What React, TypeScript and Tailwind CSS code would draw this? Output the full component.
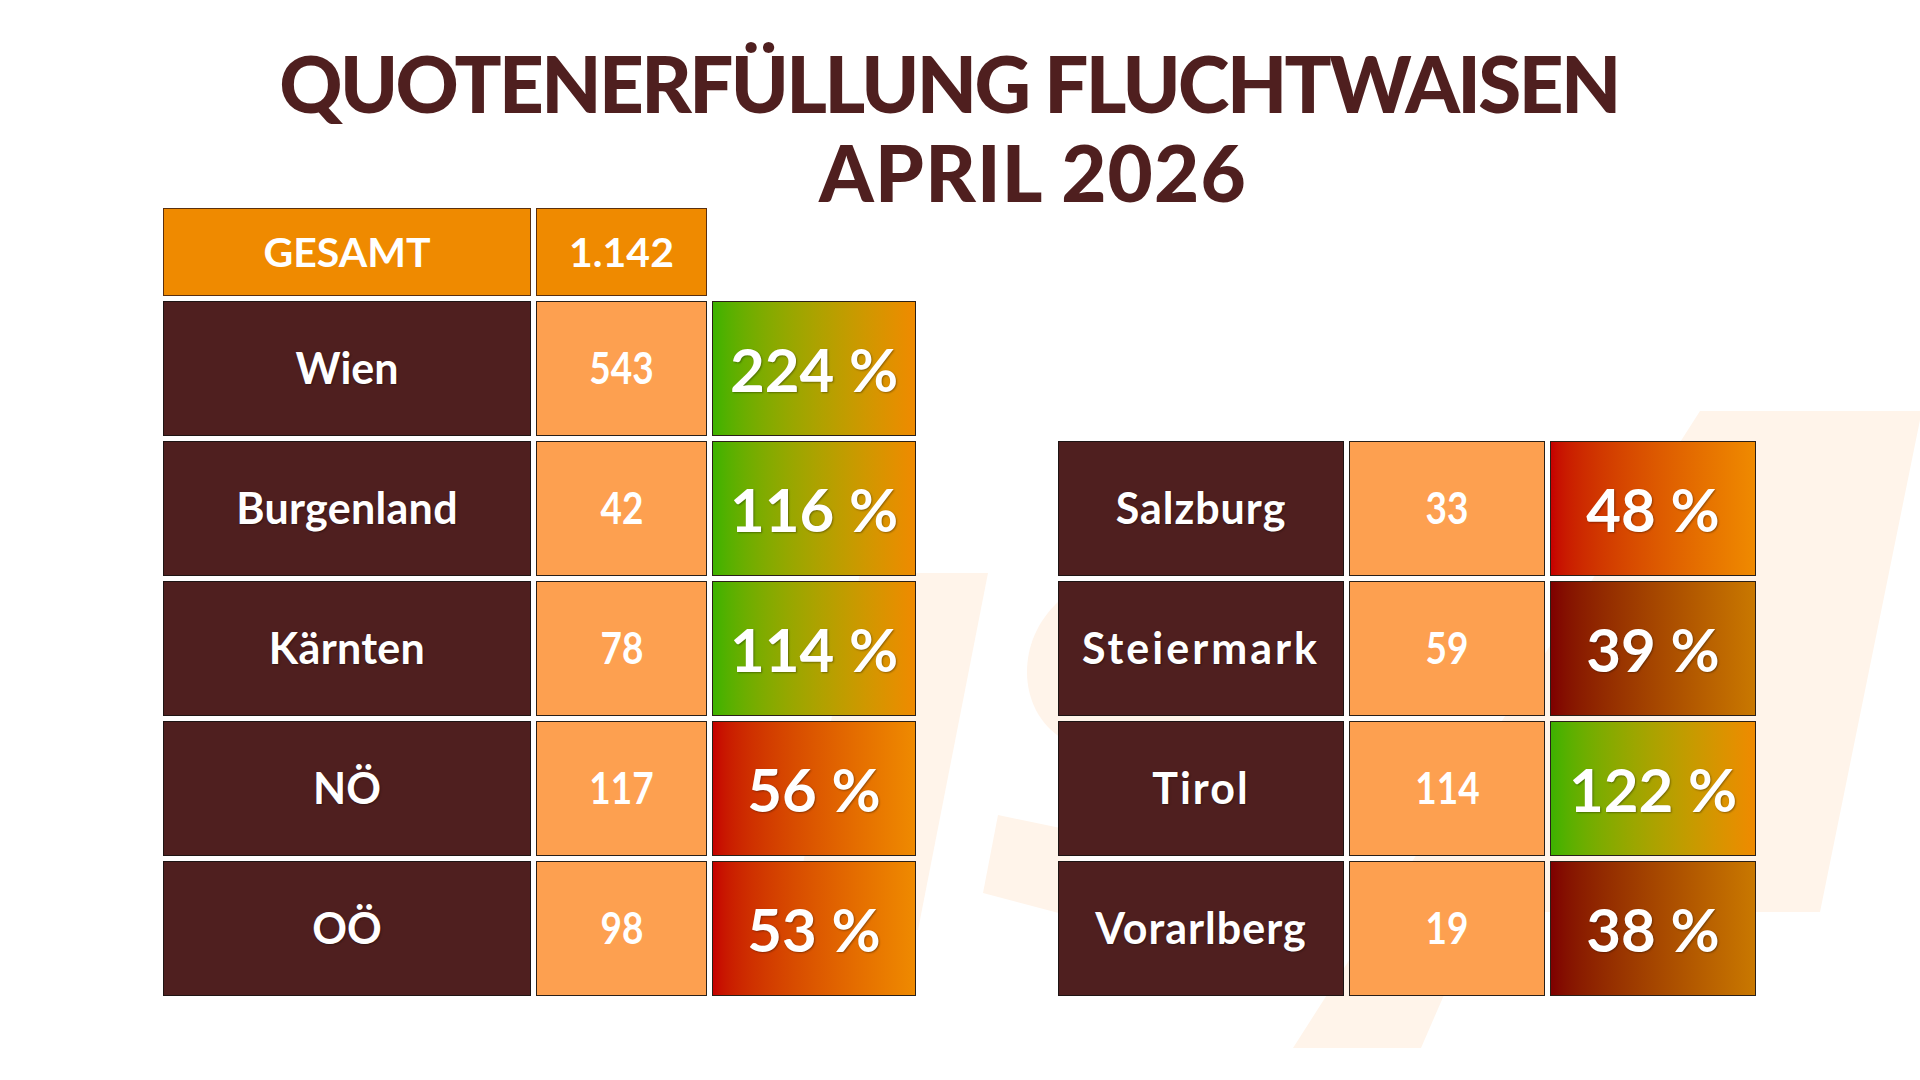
import React from 'react';

type Tone = 'green' | 'red' | 'dark';

const toneClass: Record<Tone, string> = {
  green: 'bg-linear-to-r from-[#3cb200] to-[#ef8a00]',
  red: 'bg-linear-to-r from-[#c60000] to-[#ef8a00]',
  dark: 'bg-linear-to-r from-[#7f0000] to-[#c97800]',
};

const leftRows = [
  { name: 'Wien', count: '543', pct: '224 %', tone: 'green' as Tone, track: '' },
  { name: 'Burgenland', count: '42', pct: '116 %', tone: 'green' as Tone, track: 'tracking-[0.3px]' },
  { name: 'Kärnten', count: '78', pct: '114 %', tone: 'green' as Tone, track: 'tracking-[0.3px]' },
  { name: 'NÖ', count: '117', pct: '56 %', tone: 'red' as Tone, track: '' },
  { name: 'OÖ', count: '98', pct: '53 %', tone: 'red' as Tone, track: '' },
];

const rightRows = [
  { name: 'Salzburg', count: '33', pct: '48 %', tone: 'red' as Tone, track: 'tracking-[1px]' },
  { name: 'Steiermark', count: '59', pct: '39 %', tone: 'dark' as Tone, track: 'tracking-[3px]' },
  { name: 'Tirol', count: '114', pct: '122 %', tone: 'green' as Tone, track: 'tracking-[2px]' },
  { name: 'Vorarlberg', count: '19', pct: '38 %', tone: 'dark' as Tone, track: 'tracking-[1px]' },
];

const shadow = '[text-shadow:1px_1px_2px_rgba(0,0,0,0.35)]';

// faint logo in the background
const Watermark = () => (
  <svg className="absolute inset-0" width="1920" height="1080" viewBox="0 0 1920 1080">
    <g fill="#fff4ea">
      <polygon points="1796,411 1920,411 1920,420 1820,912 1480,912 1421,1048 1293,1048 1700,411" />
      <polygon points="860,573 988,573 918,930 790,930" />
      <path d="M1060,600 C1036,622 1027,648 1027,672 C1027,700 1040,724 1060,737 L1200,737 L1200,600 Z" />
      <polygon points="998,815 1070,830 1070,916 983,893" />
    </g>
  </svg>
);

const Row = ({
  name,
  count,
  pct,
  tone,
  track,
  widths,
}: {
  name: string;
  count: string;
  pct: string;
  tone: Tone;
  track: string;
  widths: [string, string, string];
}) => (
  <div className="flex gap-[5px] h-[135px]">
    <div className={`${widths[0]} bg-[#4f1f1f] border-[1.5px] border-[#1e1414] flex items-center justify-center text-white text-[43px] font-bold ${track} ${shadow}`}>
      {name}
    </div>
    <div className={`${widths[1]} bg-[#fda050] border-[1.5px] border-[#2a2018] flex items-center justify-center text-white text-[43px] font-bold`}>
      <span className="inline-block scale-x-[0.86]">{count}</span>
    </div>
    <div className={`${widths[2]} ${toneClass[tone]} border-[1.5px] border-[#2a2018] flex items-center justify-center text-white text-[60px] font-bold ${shadow}`}>
      {pct}
    </div>
  </div>
);

const App = () => {
  return (
    <div className="relative w-[1920px] h-[1080px] bg-white overflow-hidden font-['Lato','Open_Sans',sans-serif]">
      <Watermark />
      <div className="relative">
        <h1 className="pt-[47px] text-[#4f1f1f] text-[78px] leading-[72px] font-black">
          <div className="text-center pr-[22px] tracking-[-2.6px]">QUOTENERFÜLLUNG FLUCHTWAISEN</div>
          <div className="text-center pl-[146px] mt-[17px] tracking-[1.2px]">APRIL 2026</div>
        </h1>

        <div className="flex items-start pl-[163px]">
          <div className="flex flex-col gap-[5px]">
            <div className="flex gap-[5px] h-[88px]">
              <div className="w-[368px] bg-[#ef8a00] border-[1.5px] border-[#5a3010] flex items-center justify-center text-white text-[41px] font-bold">
                GESAMT
              </div>
              <div className="w-[171px] bg-[#ef8a00] border-[1.5px] border-[#5a3010] flex items-center justify-center text-white text-[41px] font-bold">
                1.142
              </div>
            </div>
            {leftRows.map((r) => (
              <Row key={r.name} {...r} widths={['w-[368px]', 'w-[171px]', 'w-[204px]']} />
            ))}
          </div>

          <div className="flex flex-col gap-[5px] ml-[142px] mt-[233px]">
            {rightRows.map((r) => (
              <Row key={r.name} {...r} widths={['w-[286px]', 'w-[196px]', 'w-[206px]']} />
            ))}
          </div>
        </div>
      </div>
    </div>
  );
};

export default App;
